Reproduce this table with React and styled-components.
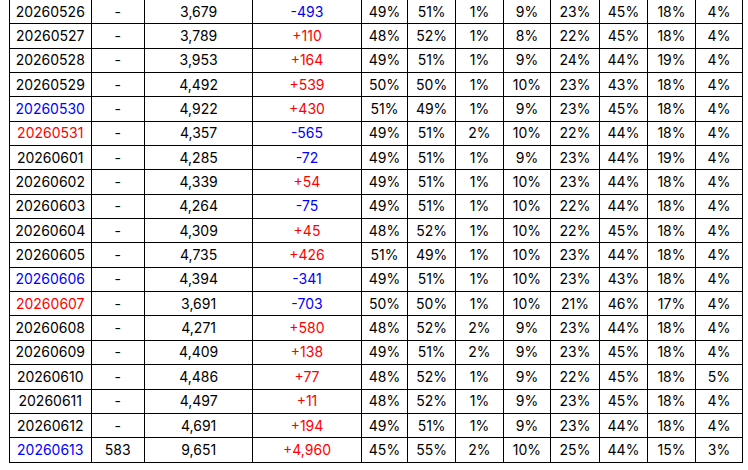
import React from "react";
import styled, { createGlobalStyle } from "styled-components";

const Global = createGlobalStyle`
  html, body { margin: 0; padding: 0; background: #fff; overflow: hidden; }
  body { font-family: Inter, "Noto Sans", sans-serif; }
`;

const Wrap = styled.div`
  padding-left: 9px;
  margin-top: -1px;
`;

const Table = styled.table`
  border-collapse: collapse;
  table-layout: fixed;
  width: 734px;
  font-family: Inter, "Noto Sans", sans-serif;
  font-size: 14px;
  color: #000;
`;

const Cell = styled.td`
  border: 1px solid #000;
  padding: 0;
  height: 23.35px;
  line-height: 16px;
  text-align: center;
  white-space: nowrap;
  color: ${(p) => p.$color || "#000"};
`;

const widths = [81.5, 53.5, 108.3, 108.4, 46.6, 47.7, 48, 47, 49, 48, 48, 47];

const rows = [
  ["20260526", "-", "3,679", "-493", 49, 51, 1, 9, 23, 45, 18, 4, 0],
  ["20260527", "-", "3,789", "+110", 48, 52, 1, 8, 22, 45, 18, 4, 0],
  ["20260528", "-", "3,953", "+164", 49, 51, 1, 9, 24, 44, 19, 4, 0],
  ["20260529", "-", "4,492", "+539", 50, 50, 1, 10, 23, 43, 18, 4, 0],
  ["20260530", "-", "4,922", "+430", 51, 49, 1, 9, 23, 45, 18, 4, 1],
  ["20260531", "-", "4,357", "-565", 49, 51, 2, 10, 22, 44, 18, 4, 2],
  ["20260601", "-", "4,285", "-72", 49, 51, 1, 9, 23, 44, 19, 4, 0],
  ["20260602", "-", "4,339", "+54", 49, 51, 1, 10, 23, 44, 18, 4, 0],
  ["20260603", "-", "4,264", "-75", 49, 51, 1, 10, 22, 44, 18, 4, 0],
  ["20260604", "-", "4,309", "+45", 48, 52, 1, 10, 22, 45, 18, 4, 0],
  ["20260605", "-", "4,735", "+426", 51, 49, 1, 10, 23, 44, 18, 4, 0],
  ["20260606", "-", "4,394", "-341", 49, 51, 1, 10, 23, 43, 18, 4, 1],
  ["20260607", "-", "3,691", "-703", 50, 50, 1, 10, 21, 46, 17, 4, 2],
  ["20260608", "-", "4,271", "+580", 48, 52, 2, 9, 23, 44, 18, 4, 0],
  ["20260609", "-", "4,409", "+138", 49, 51, 2, 9, 23, 45, 18, 4, 0],
  ["20260610", "-", "4,486", "+77", 48, 52, 1, 9, 22, 45, 18, 5, 0],
  ["20260611", "-", "4,497", "+11", 48, 52, 1, 9, 23, 45, 18, 4, 0],
  ["20260612", "-", "4,691", "+194", 49, 51, 1, 9, 23, 44, 18, 4, 0],
  ["20260613", "583", "9,651", "+4,960", 45, 55, 2, 10, 25, 44, 15, 3, 1],
];

const dayColor = ["#000", "#0000ff", "#ff0000"];

export default function App() {
  return (
    <>
      <Global />
      <Wrap>
        <Table>
          <colgroup>
            {widths.map((w, i) => (
              <col key={i} style={{ width: w }} />
            ))}
          </colgroup>
          <tbody>
            {rows.map((r) => (
              <tr key={r[0]}>
                <Cell $color={dayColor[r[12]]}>{r[0]}</Cell>
                <Cell>{r[1]}</Cell>
                <Cell>{r[2]}</Cell>
                <Cell $color={r[3].startsWith("-") ? "#0000ff" : "#ff0000"}>{r[3]}</Cell>
                {r.slice(4, 12).map((v, i) => (
                  <Cell key={i}>{v}%</Cell>
                ))}
              </tr>
            ))}
          </tbody>
        </Table>
      </Wrap>
    </>
  );
}
